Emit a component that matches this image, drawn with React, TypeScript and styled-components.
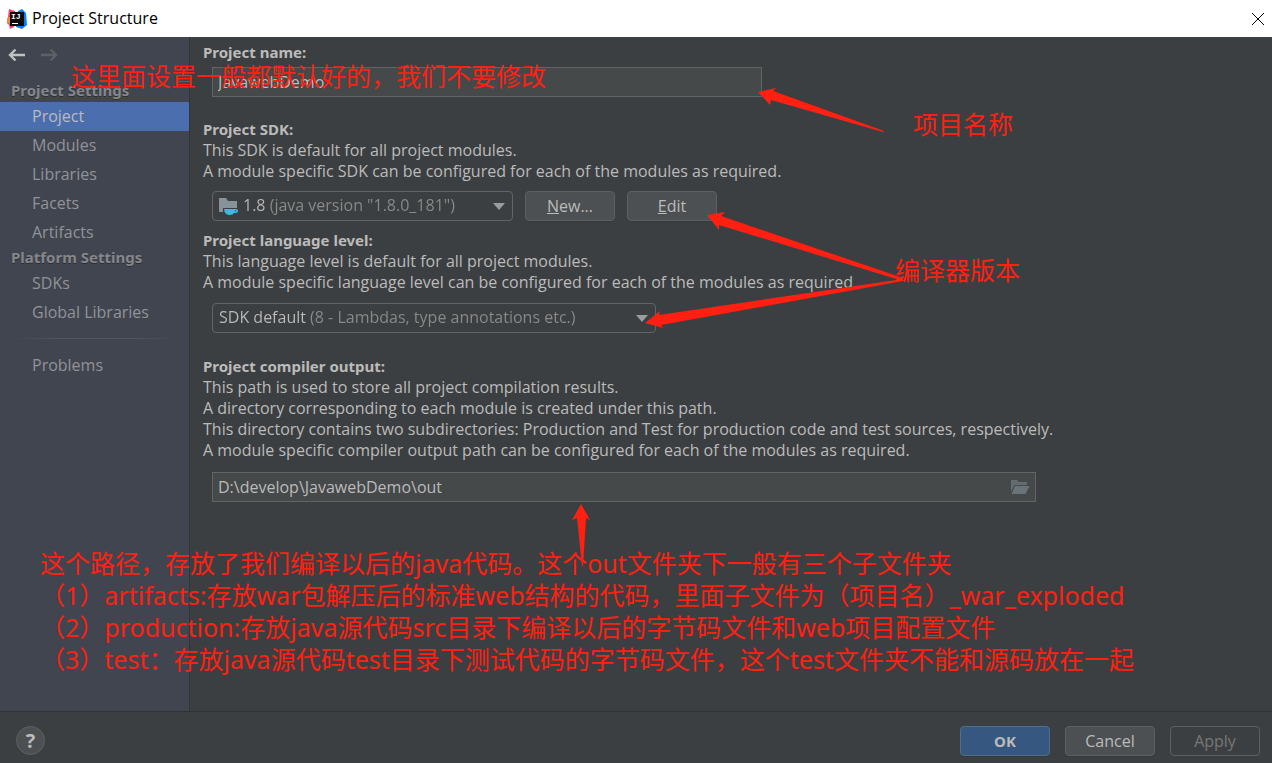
import React from 'react';
import styled, { createGlobalStyle, css } from 'styled-components';

const uiFont = `'Open Sans', 'Noto Sans', 'Noto Sans CJK SC', sans-serif`;
const headingFont = `'Noto Sans', 'Open Sans', 'Noto Sans CJK SC', sans-serif`;

const GlobalStyle = createGlobalStyle`
  *, *::before, *::after { box-sizing: border-box; }
  body { margin: 0; background: #3c3f41; font-family: ${uiFont}; }
  button, input, select { font: inherit; color: inherit; }
  h2, p, ul { margin: 0; padding: 0; }
`;

const Dialog = styled.div`
  position: relative;
  display: flex;
  flex-direction: column;
  min-height: 100vh;
  background: #3c3f41;
  color: #bbbbbb;
  font-size: 16px;
  line-height: 21px;
`;

const TitleBar = styled.header`
  display: flex;
  align-items: center;
  height: 37px;
  padding: 0 7px;
  gap: 5px;
  background: #ffffff;
  color: #000000;
`;

const Title = styled.span`
  flex: 1;
`;

const CloseButton = styled.button`
  display: flex;
  padding: 0;
  border: 0;
  background: none;
`;

const Body = styled.div`
  display: flex;
  flex: 1;
`;

const Sidebar = styled.nav`
  flex: 0 0 190px;
  background: #414550;
  border-right: 1px solid #323537;
`;

const History = styled.div`
  display: flex;
  gap: 16px;
  height: 42px;
  padding: 10px 8px 0;
`;

const HistoryButton = styled.button`
  display: flex;
  height: 16px;
  padding: 0;
  border: 0;
  background: none;
  color: #bfc1c3;
  &:disabled { color: #5d6064; }
`;

const GroupTitle = styled.h2`
  height: 23px;
  padding-left: 11px;
  font-family: ${headingFont};
  font-size: 15px;
  line-height: 22px;
  color: #84868a;
  text-shadow: 0 1px 0 #2c2e33;
`;

const NavList = styled.ul`
  list-style: none;
`;

const NavLink = styled.a<{ $active?: boolean }>`
  display: block;
  height: 29px;
  padding-left: 32px;
  line-height: 29px;
  text-decoration: none;
  color: #919398;
  ${p => p.$active && css`
    background: #4b6eaf;
    color: #bbbbbb;
  `}
`;

const PlatformGroup = styled.div`
  margin-top: -1px;
`;

const NavDivider = styled.div`
  height: 1px;
  margin: 11px 10px 12px;
  background: linear-gradient(to right, transparent, #55565a 30%, #55565a 70%, transparent);
`;

const Content = styled.main`
  flex: 1;
  min-width: 0;
  padding: 5px 14px 40px 13px;
`;

const Section = styled.section<{ $gap: number }>`
  margin-bottom: ${p => p.$gap}px;
`;

const SectionTitle = styled.label`
  display: block;
  font-family: ${headingFont};
  font-size: 15px;
  font-weight: 700;
`;

const Description = styled.p``;

const Controls = styled.div<{ $top: number }>`
  display: flex;
  gap: 12px;
  margin-top: ${p => p.$top}px;
  padding-left: 9px;
`;

const TextField = styled.div<{ $width: number }>`
  display: flex;
  align-items: center;
  width: ${p => p.$width}px;
  height: 30px;
  padding-right: 5px;
  background: #45494a;
  border: 1px solid #646464;
`;

const TextInput = styled.input`
  flex: 1;
  min-width: 0;
  height: 28px;
  padding: 0 5px 1px;
  border: 0;
  outline: 0;
  background: none;
`;

const BrowseButton = styled.button`
  display: flex;
  padding: 0;
  border: 0;
  background: none;
`;

const Combo = styled.div<{ $width: number }>`
  display: flex;
  align-items: center;
  gap: 4px;
  width: ${p => p.$width}px;
  height: 30px;
  padding: 0 7px 0 6px;
  border: 1px solid #646464;
  border-radius: 4px;
`;

const ComboSelect = styled.select<{ $bright: number }>`
  flex: 1;
  min-width: 0;
  height: 28px;
  padding: 0 0 1px;
  border: 0;
  outline: 0;
  appearance: none;
  color: transparent;
  background: linear-gradient(to right, #bbbbbb ${p => p.$bright}px, #8a8a8a ${p => p.$bright}px);
  background-clip: text;
  -webkit-background-clip: text;
`;

const Button = styled.button<{ $primary?: boolean }>`
  width: 90px;
  height: 30px;
  padding: 0;
  border: 1px solid #5e6060;
  border-radius: 4px;
  background: #4c5052;
  line-height: 28px;
  box-shadow: 0 1px 0 #36393a;
  ${p => p.$primary && css`
    background: #365880;
    border-color: #4c708c;
    font-family: ${headingFont};
    font-size: 15px;
    font-weight: 700;
  `}
  &:disabled {
    background: none;
    color: #777777;
    box-shadow: none;
  }
`;

const Footer = styled.footer`
  display: flex;
  align-items: center;
  justify-content: space-between;
  height: 52px;
  padding: 6px 12px 0 16px;
  border-top: 1px solid #323232;
`;

const FooterButtons = styled.div`
  display: flex;
  gap: 15px;
`;

const HelpButton = styled.button`
  width: 29px;
  height: 29px;
  padding: 0;
  border: 1px solid #5e6060;
  border-radius: 50%;
  background: #4c5052;
  font-size: 20px;
  font-weight: 700;
  line-height: 27px;
`;

const Arrows = styled.svg`
  position: absolute;
  inset: 0;
  width: 100%;
  height: 100%;
  fill: #ff2012;
  pointer-events: none;
`;

const Note = styled.p<{ $x: number; $y: number }>`
  position: absolute;
  left: ${p => p.$x}px;
  top: ${p => p.$y}px;
  font-family: 'Noto Sans', 'Noto Sans CJK SC', sans-serif;
  font-size: 25px;
  line-height: 32px;
  color: #ff2012;
  white-space: pre;
  pointer-events: none;
`;

const Logo = () => (
  <svg width="20" height="20" viewBox="0 0 20 20" aria-hidden="true">
    <path d="M2 0l6 2 2 8-3 8-4 2-1-4-2-2 1-6z" fill="#f3426b" />
    <path d="M0 9l5-2v9l-5-3z" fill="#fb8b3c" />
    <path d="M11 2l4-2 4 4 1 12-5 4-6-2z" fill="#087cfa" />
    <rect x="3" y="3" width="14" height="14" fill="#0a0a0a" />
    <text x="4" y="10" fontFamily="Liberation Mono" fontWeight="700" fontSize="8" fill="#fff">IJ</text>
    <rect x="5" y="14" width="6" height="1" fill="#fff" />
  </svg>
);

const Arrow = ({ flip }: { flip?: boolean }) => (
  <svg width="17" height="16" viewBox="0 0 17 16" fill="none" stroke="currentColor" strokeWidth="2.4" aria-hidden="true">
    {flip ? <path d="M0 8h15M9.500 2.500L15 8L9.500 13.500" /> : <path d="M17 8H2M7.500 2.500L2 8L7.500 13.500" />}
  </svg>
);

const SdkIcon = () => (
  <svg width="20" height="20" viewBox="0 0 20 20" aria-hidden="true">
    <path d="M0 2h7l2 3h9v7H4v4H0z" fill="#87939a" />
    <path d="M5 13h12a2 2 0 0 1 0 4h-2q-1 2-4 2Q5.500 19 5 13z" fill="#40b6e0" />
    <path d="M16 14.500h1v1h-1z" fill="#3c3f41" />
  </svg>
);

const FolderIcon = () => (
  <svg width="20" height="16" viewBox="0 0 20 16" aria-hidden="true">
    <path d="M1 1h6l2 2h8v3H4.500L1 13z" fill="#626c71" />
    <path d="M5 7h14.500l-4 8H1.500z" fill="#69747a" />
  </svg>
);

const Caret = () => (
  <svg width="12" height="7" viewBox="0 0 12 7" aria-hidden="true">
    <path d="M0 0h12L6 7z" fill="#9a9da0" />
  </svg>
);

const projectItems = ['Project', 'Modules', 'Libraries', 'Facets', 'Artifacts'];
const platformItems = ['SDKs', 'Global Libraries'];

const NavItems = ({ items }: { items: string[] }) => (
  <NavList>
    {items.map(item => (
      <li key={item}>
        <NavLink href="#" $active={item === 'Project'}>{item}</NavLink>
      </li>
    ))}
  </NavList>
);

export default function App() {
  return (
    <>
      <GlobalStyle />
      <Dialog>
        <TitleBar>
          <Logo />
          <Title>Project Structure</Title>
          <CloseButton aria-label="Close">
            <svg width="14" height="14" viewBox="0 0 14 14" stroke="#000" aria-hidden="true">
              <path d="M1 1l12 12M13 1L1 13" />
            </svg>
          </CloseButton>
        </TitleBar>
        <Body>
          <Sidebar>
            <History>
              <HistoryButton aria-label="Back"><Arrow /></HistoryButton>
              <HistoryButton aria-label="Forward" disabled><Arrow flip /></HistoryButton>
            </History>
            <GroupTitle>Project Settings</GroupTitle>
            <NavItems items={projectItems} />
            <PlatformGroup>
              <GroupTitle>Platform Settings</GroupTitle>
              <NavItems items={platformItems} />
            </PlatformGroup>
            <NavDivider />
            <NavItems items={['Problems']} />
          </Sidebar>
          <Content>
            <Section $gap={22}>
              <SectionTitle htmlFor="name">Project name:</SectionTitle>
              <Controls $top={4}>
                <TextField $width={550}>
                  <TextInput id="name" defaultValue="JavawebDemo" />
                </TextField>
              </Controls>
            </Section>
            <Section $gap={9}>
              <SectionTitle htmlFor="sdk">Project SDK:</SectionTitle>
              <Description>This SDK is default for all project modules.</Description>
              <Description>A module specific SDK can be configured for each of the modules as required.</Description>
              <Controls $top={9}>
                <Combo $width={301}>
                  <SdkIcon />
                  <ComboSelect id="sdk" $bright={24}>
                    <option>1.8 (java version "1.8.0_181")</option>
                  </ComboSelect>
                  <Caret />
                </Combo>
                <Button><u>N</u>ew...</Button>
                <Button><u>E</u>dit</Button>
              </Controls>
            </Section>
            <Section $gap={23}>
              <SectionTitle htmlFor="level">Project language level:</SectionTitle>
              <Description>This language level is default for all project modules.</Description>
              <Description>A module specific language level can be configured for each of the modules as required.</Description>
              <Controls $top={10}>
                <Combo $width={444}>
                  <ComboSelect id="level" $bright={87}>
                    <option>SDK default (8 - Lambdas, type annotations etc.)</option>
                  </ComboSelect>
                  <Caret />
                </Combo>
              </Controls>
            </Section>
            <Section $gap={0}>
              <SectionTitle htmlFor="output">Project compiler output:</SectionTitle>
              <Description>This path is used to store all project compilation results.</Description>
              <Description>A directory corresponding to each module is created under this path.</Description>
              <Description>This directory contains two subdirectories: Production and Test for production code and test sources, respectively.</Description>
              <Description>A module specific compiler output path can be configured for each of the modules as required.</Description>
              <Controls $top={11}>
                <TextField $width={824}>
                  <TextInput id="output" defaultValue="D:\develop\JavawebDemo\out" />
                  <BrowseButton aria-label="Browse"><FolderIcon /></BrowseButton>
                </TextField>
              </Controls>
            </Section>
          </Content>
        </Body>
        <Footer>
          <HelpButton aria-label="Help">?</HelpButton>
          <FooterButtons>
            <Button $primary>OK</Button>
            <Button>Cancel</Button>
            <Button disabled>Apply</Button>
          </FooterButtons>
        </Footer>
        <Arrows aria-hidden="true">
          <path d="M758 92L776 88L773 91L884 131L883 132L771 100L770 105Z" />
          <path d="M707 215L725 212L721 216L903 278V281L719 225V230Z" />
          <path d="M645 323L660 311L659 315L903 279V281L661 325L663 328Z" />
          <path d="M581 504L590 520L586 518L583 566H582L577 518L572 520Z" />
        </Arrows>
        <Note $x={71} $y={60}>这里面设置一般都默认好的，我们不要修改</Note>
        <Note $x={913} $y={108}>项目名称</Note>
        <Note $x={895} $y={254}>编译器版本</Note>
        <Note $x={40} $y={547}>
          {`这个路径，存放了我们编译以后的java代码。这个out文件夹下一般有三个子文件夹
（1）artifacts:存放war包解压后的标准web结构的代码，里面子文件为（项目名）_war_exploded
（2）production:存放java源代码src目录下编译以后的字节码文件和web项目配置文件
（3）test：存放java源代码test目录下测试代码的字节码文件，这个test文件夹不能和源码放在一起`}
        </Note>
      </Dialog>
    </>
  );
}
